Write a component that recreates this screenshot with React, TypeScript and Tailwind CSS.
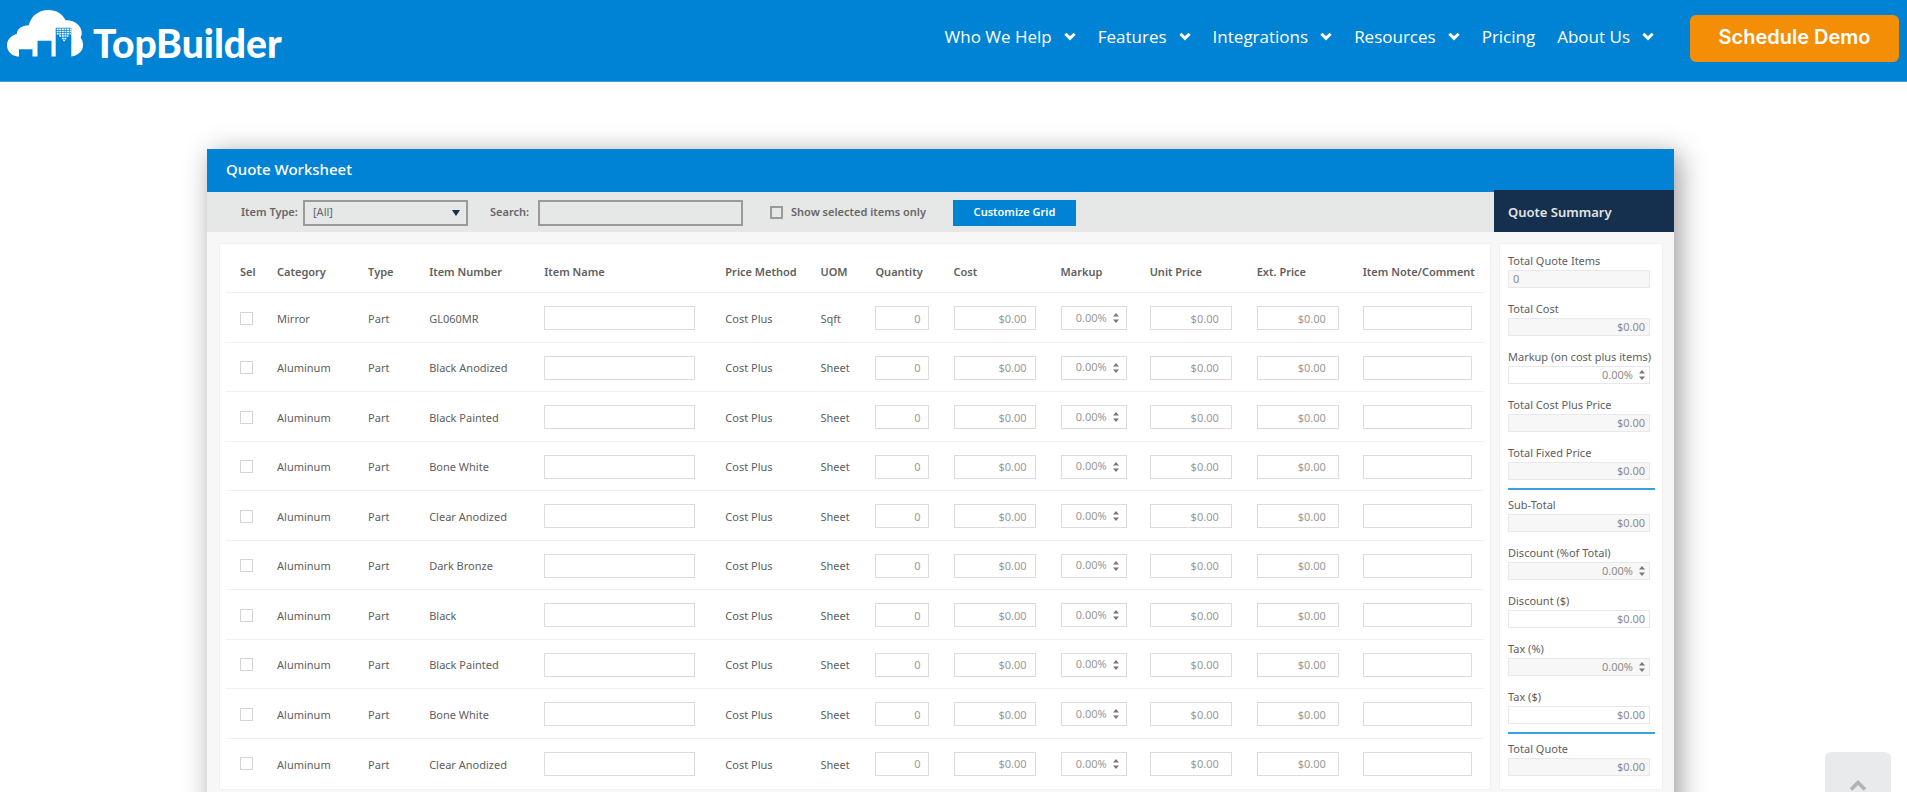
import React from "react";

const navItems = [
  { label: "Who We Help", menu: true },
  { label: "Features", menu: true },
  { label: "Integrations", menu: true },
  { label: "Resources", menu: true },
  { label: "Pricing", menu: false },
  { label: "About Us", menu: true },
];

const rows = [
  { category: "Mirror", number: "GL060MR", uom: "Sqft" },
  { category: "Aluminum", number: "Black Anodized", uom: "Sheet" },
  { category: "Aluminum", number: "Black Painted", uom: "Sheet" },
  { category: "Aluminum", number: "Bone White", uom: "Sheet" },
  { category: "Aluminum", number: "Clear Anodized", uom: "Sheet" },
  { category: "Aluminum", number: "Dark Bronze", uom: "Sheet" },
  { category: "Aluminum", number: "Black", uom: "Sheet" },
  { category: "Aluminum", number: "Black Painted", uom: "Sheet" },
  { category: "Aluminum", number: "Bone White", uom: "Sheet" },
  { category: "Aluminum", number: "Clear Anodized", uom: "Sheet" },
];

type SummaryField = {
  id: string;
  label: string;
  value: string;
  editable?: boolean;
  stepper?: boolean;
  left?: boolean;
};

const summaryGroups: SummaryField[][] = [
  [
    { id: "total-items", label: "Total Quote Items", value: "0", left: true },
    { id: "total-cost", label: "Total Cost", value: "$0.00" },
    { id: "markup", label: "Markup (on cost plus items)", value: "0.00%", editable: true, stepper: true },
    { id: "cost-plus", label: "Total Cost Plus Price", value: "$0.00" },
    { id: "fixed-price", label: "Total Fixed Price", value: "$0.00" },
  ],
  [
    { id: "sub-total", label: "Sub-Total", value: "$0.00" },
    { id: "discount-pct", label: "Discount (%of Total)", value: "0.00%", stepper: true },
    { id: "discount-amt", label: "Discount ($)", value: "$0.00", editable: true },
    { id: "tax-pct", label: "Tax (%)", value: "0.00%", stepper: true },
    { id: "tax-amt", label: "Tax ($)", value: "$0.00", editable: true },
  ],
  [{ id: "total-quote", label: "Total Quote", value: "$0.00" }],
];

const box = "block h-6 w-full border border-[#dcdcdc] bg-white text-right text-[11px] text-[#999]";

function CloudLogo() {
  return (
    <svg width="78" height="50" viewBox="0 0 78 50" aria-hidden="true">
      <path
        fill="#fff"
        d="M10.500 46.600C4.500 45.500 0 41.300 0 35.500C0 29.500 4.500 25 9.800 24C9.800 19 15 15.300 21.800 15.300C24 6 31.500 0 41.500 0C49.500 0 55.500 4 58.500 10.200C67 9.500 75 15.500 74.800 23.500C74.700 25 74 26.500 73.600 27.500C75.500 30 76 32.500 76 35.500C76 41 71 45.500 64.300 46.600V17.700H48.700V46.600H44.500V30.700H30.500V46.600H25.500V39.300H12V46.600Z"
      />
      <g stroke="#fff" strokeWidth="1.500" strokeDasharray="1.900 0.700" fill="none">
        <path d="M49.700 19.200H64M49.700 21.500H64M49.700 23.800H64M52.300 26.100H61.500M54.900 28.400H60M56.200 30.400H58.100" />
      </g>
    </svg>
  );
}

function ChevronDown() {
  return (
    <svg width="12" height="9" viewBox="0 0 12 9" fill="none" aria-hidden="true">
      <path d="M1.400 1.700L6 6.300L10.600 1.700" stroke="#fff" strokeWidth="3" />
    </svg>
  );
}

function ChevronUp() {
  return (
    <svg width="18" height="12" viewBox="0 0 18 12" fill="none" aria-hidden="true">
      <path d="M2 10.500L9 3.500L16 10.500" stroke="#b0b2b5" strokeWidth="3.600" />
    </svg>
  );
}

function Stepper() {
  return (
    <svg width="6" height="10" viewBox="0 0 6 10" className="shrink-0" aria-hidden="true">
      <path fill="#777" d="M3 0L6 3.500H0ZM3 10L6 6.500H0Z" />
    </svg>
  );
}

function Header() {
  return (
    <header className="flex h-[82px] items-start justify-between border-b border-[#3b9fe0] bg-[#0083d4] pr-2 pl-[7px]">
      <a href="#home" className="flex items-start text-white" aria-label="TopBuilder">
        <span className="pt-[10px]">
          <CloudLogo />
        </span>
        <span className="pt-[19px] pl-2 font-['Lato',sans-serif] text-[39px] leading-[48px] font-black">
          TopBuilder
        </span>
      </a>
      <div className="flex items-start gap-9 pt-[15px]">
        <nav className="flex h-[43px] items-center gap-[22px] font-['Open_Sans',sans-serif] text-[17px] text-white">
          {navItems.map((item) => (
            <a key={item.label} href="#menu" className="flex items-center gap-3 whitespace-nowrap">
              {item.label}
              {item.menu && <ChevronDown />}
            </a>
          ))}
        </nav>
        <button className="h-[47px] w-[209px] rounded-md bg-[#f48e07] pb-[3px] font-['Inter',sans-serif] text-[20px] font-semibold text-white">
          Schedule Demo
        </button>
      </div>
    </header>
  );
}

function Toolbar() {
  return (
    <div className="flex h-10 flex-1 items-center bg-[#e6e7e7] pt-px pl-[34px] text-[11px] font-semibold text-[#666]">
      <label htmlFor="item-type" className="w-[62px] whitespace-nowrap">
        Item Type:
      </label>
      <div className="relative mr-[22px] w-[165px]">
        <select
          id="item-type"
          className="block h-[26px] w-full appearance-none border-2 border-[#9a9a9a] bg-transparent pl-2 font-normal"
        >
          <option>[All]</option>
        </select>
        <svg width="8" height="6" viewBox="0 0 8 6" className="pointer-events-none absolute top-[10px] right-2">
          <path fill="#14304e" d="M0 0H8L4 6Z" />
        </svg>
      </div>
      <label htmlFor="search" className="w-12">
        Search:
      </label>
      <input id="search" type="text" className="mr-[27px] h-[26px] w-[205px] border-2 border-[#9a9a9a] px-2" />
      <label className="flex w-[183px] items-center gap-2 whitespace-nowrap">
        <input type="checkbox" className="size-[13px] appearance-none border-2 border-[#9a9a9a]" />
        Show selected items only
      </label>
      <button className="h-[26px] w-[123px] bg-[#0083d4] text-white">Customize Grid</button>
    </div>
  );
}

function ItemTable() {
  return (
    <table className="w-full table-fixed text-left text-[11px] text-[#606060]">
      <colgroup>
        <col className="w-[51px]" />
        <col className="w-[91px]" />
        <col className="w-[61px]" />
        <col className="w-[115px]" />
        <col className="w-[181px]" />
        <col className="w-[95px]" />
        <col className="w-[55px]" />
        <col className="w-[78px]" />
        <col className="w-[107px]" />
        <col className="w-[89px]" />
        <col className="w-[107px]" />
        <col className="w-[106px]" />
        <col className="w-[121px]" />
      </colgroup>
      <thead>
        <tr className="h-12 border-b border-[#f1f1f1] whitespace-nowrap">
          <th className="pt-2 pl-[14px] font-semibold">Sel</th>
          <th className="pt-2 font-semibold">Category</th>
          <th className="pt-2 font-semibold">Type</th>
          <th className="pt-2 font-semibold">Item Number</th>
          <th className="pt-2 font-semibold">Item Name</th>
          <th className="pt-2 font-semibold">Price Method</th>
          <th className="pt-2 font-semibold">UOM</th>
          <th className="pt-2 font-semibold">Quantity</th>
          <th className="pt-2 font-semibold">Cost</th>
          <th className="pt-2 font-semibold">Markup</th>
          <th className="pt-2 font-semibold">Unit Price</th>
          <th className="pt-2 font-semibold">Ext. Price</th>
          <th className="pt-2 font-semibold">Item Note/Comment</th>
        </tr>
      </thead>
      <tbody>
        {rows.map((row, i) => (
          <tr key={i} className="h-[49px] border-b border-[#f1f1f1] whitespace-nowrap odd:h-[50px] last:border-0">
            <td className="pt-[2px] pl-[14px]">
              <input
                type="checkbox"
                aria-label={`Select ${row.number}`}
                className="block size-[13px] appearance-none border border-[#d4d4d4]"
              />
            </td>
            <td className="pt-1">{row.category}</td>
            <td className="pt-1">Part</td>
            <td className="pt-1">{row.number}</td>
            <td className="pt-[2px] pr-[30px]">
              <input type="text" aria-label="Item name" className={box} />
            </td>
            <td className="pt-1">Cost Plus</td>
            <td className="pt-1">{row.uom}</td>
            <td className="pt-[2px] pr-[25px]">
              <input type="text" aria-label="Quantity" defaultValue="0" className={`${box} pr-[7px]`} />
            </td>
            <td className="pt-[2px] pr-[25px]">
              <input type="text" aria-label="Cost" defaultValue="$0.00" className={`${box} pr-2`} />
            </td>
            <td className="pt-[2px] pr-[23px]">
              <div className="flex h-6 items-center gap-[6px] border border-[#dcdcdc] pr-[7px]">
                <input
                  type="text"
                  aria-label="Markup"
                  defaultValue="0.00%"
                  className="w-0 flex-1 text-right text-[#999]"
                />
                <Stepper />
              </div>
            </td>
            <td className="pt-[2px] pr-[25px]">
              <input type="text" aria-label="Unit price" defaultValue="$0.00" className={`${box} pr-3`} />
            </td>
            <td className="pt-[2px] pr-6">
              <input type="text" aria-label="Extended price" defaultValue="$0.00" className={`${box} pr-3`} />
            </td>
            <td className="pt-[2px] pr-3">
              <input type="text" aria-label="Item note" className={box} />
            </td>
          </tr>
        ))}
      </tbody>
    </table>
  );
}

function Summary() {
  return (
    <div className="w-[164px] shrink-0 border border-[#f0f0f0] bg-white pt-2 pl-2 text-[11px] text-[#606060]">
      {summaryGroups.map((group, g) => (
        <div key={g}>
          {g > 0 && <hr className="mt-2 mr-[7px] mb-[6px] border-t-2 border-[#3b9fe0]" />}
          <div className="flex flex-col gap-3 pr-3">
            {group.map((field) => (
              <div key={field.id}>
                <label htmlFor={field.id} className="block h-[18px] leading-[18px] whitespace-nowrap">
                  {field.label}
                </label>
                <div
                  className={`flex h-[18px] items-center gap-[6px] border border-[#e8e8e8] px-1 ${
                    field.editable ? "bg-white" : "bg-[#f7f7f7]"
                  }`}
                >
                  <input
                    id={field.id}
                    type="text"
                    defaultValue={field.value}
                    className={`w-0 flex-1 leading-4 text-[#8c8c8c] ${field.left ? "text-left" : "text-right"}`}
                  />
                  {field.stepper && <Stepper />}
                </div>
              </div>
            ))}
          </div>
        </div>
      ))}
    </div>
  );
}

export default function App() {
  return (
    <div className="relative h-screen overflow-hidden bg-white font-['Noto_Sans',sans-serif]">
      <Header />
      <main className="pt-[67px] pr-[233px] pl-[207px]">
        <section className="bg-[#f7f7f7] pb-10 shadow-[5px_5px_26px_0_rgba(0,0,0,0.4)]">
          <div className="bg-[#0083d4]">
            <h1 className="h-[41px] pl-[19px] text-[15px] leading-[41px] font-medium text-white">Quote Worksheet</h1>
            <div className="flex items-end">
              <Toolbar />
              <h2 className="h-[42px] w-[180px] bg-[#14304e] pl-[14px] text-[13px] leading-[44px] font-semibold text-[#e4e4e4]">
                Quote Summary
              </h2>
            </div>
          </div>
          <div className="flex gap-2 pt-[11px] pr-[11px] pl-3">
            <div className="flex-1 border border-[#f0f0f0] bg-white px-[6px] pb-[2px]">
              <ItemTable />
            </div>
            <Summary />
          </div>
        </section>
      </main>
      <button
        aria-label="Back to top"
        className="absolute right-4 -bottom-[26px] flex h-[66px] w-[66px] items-center justify-center rounded-md bg-[#e9eaeb]"
      >
        <ChevronUp />
      </button>
    </div>
  );
}
